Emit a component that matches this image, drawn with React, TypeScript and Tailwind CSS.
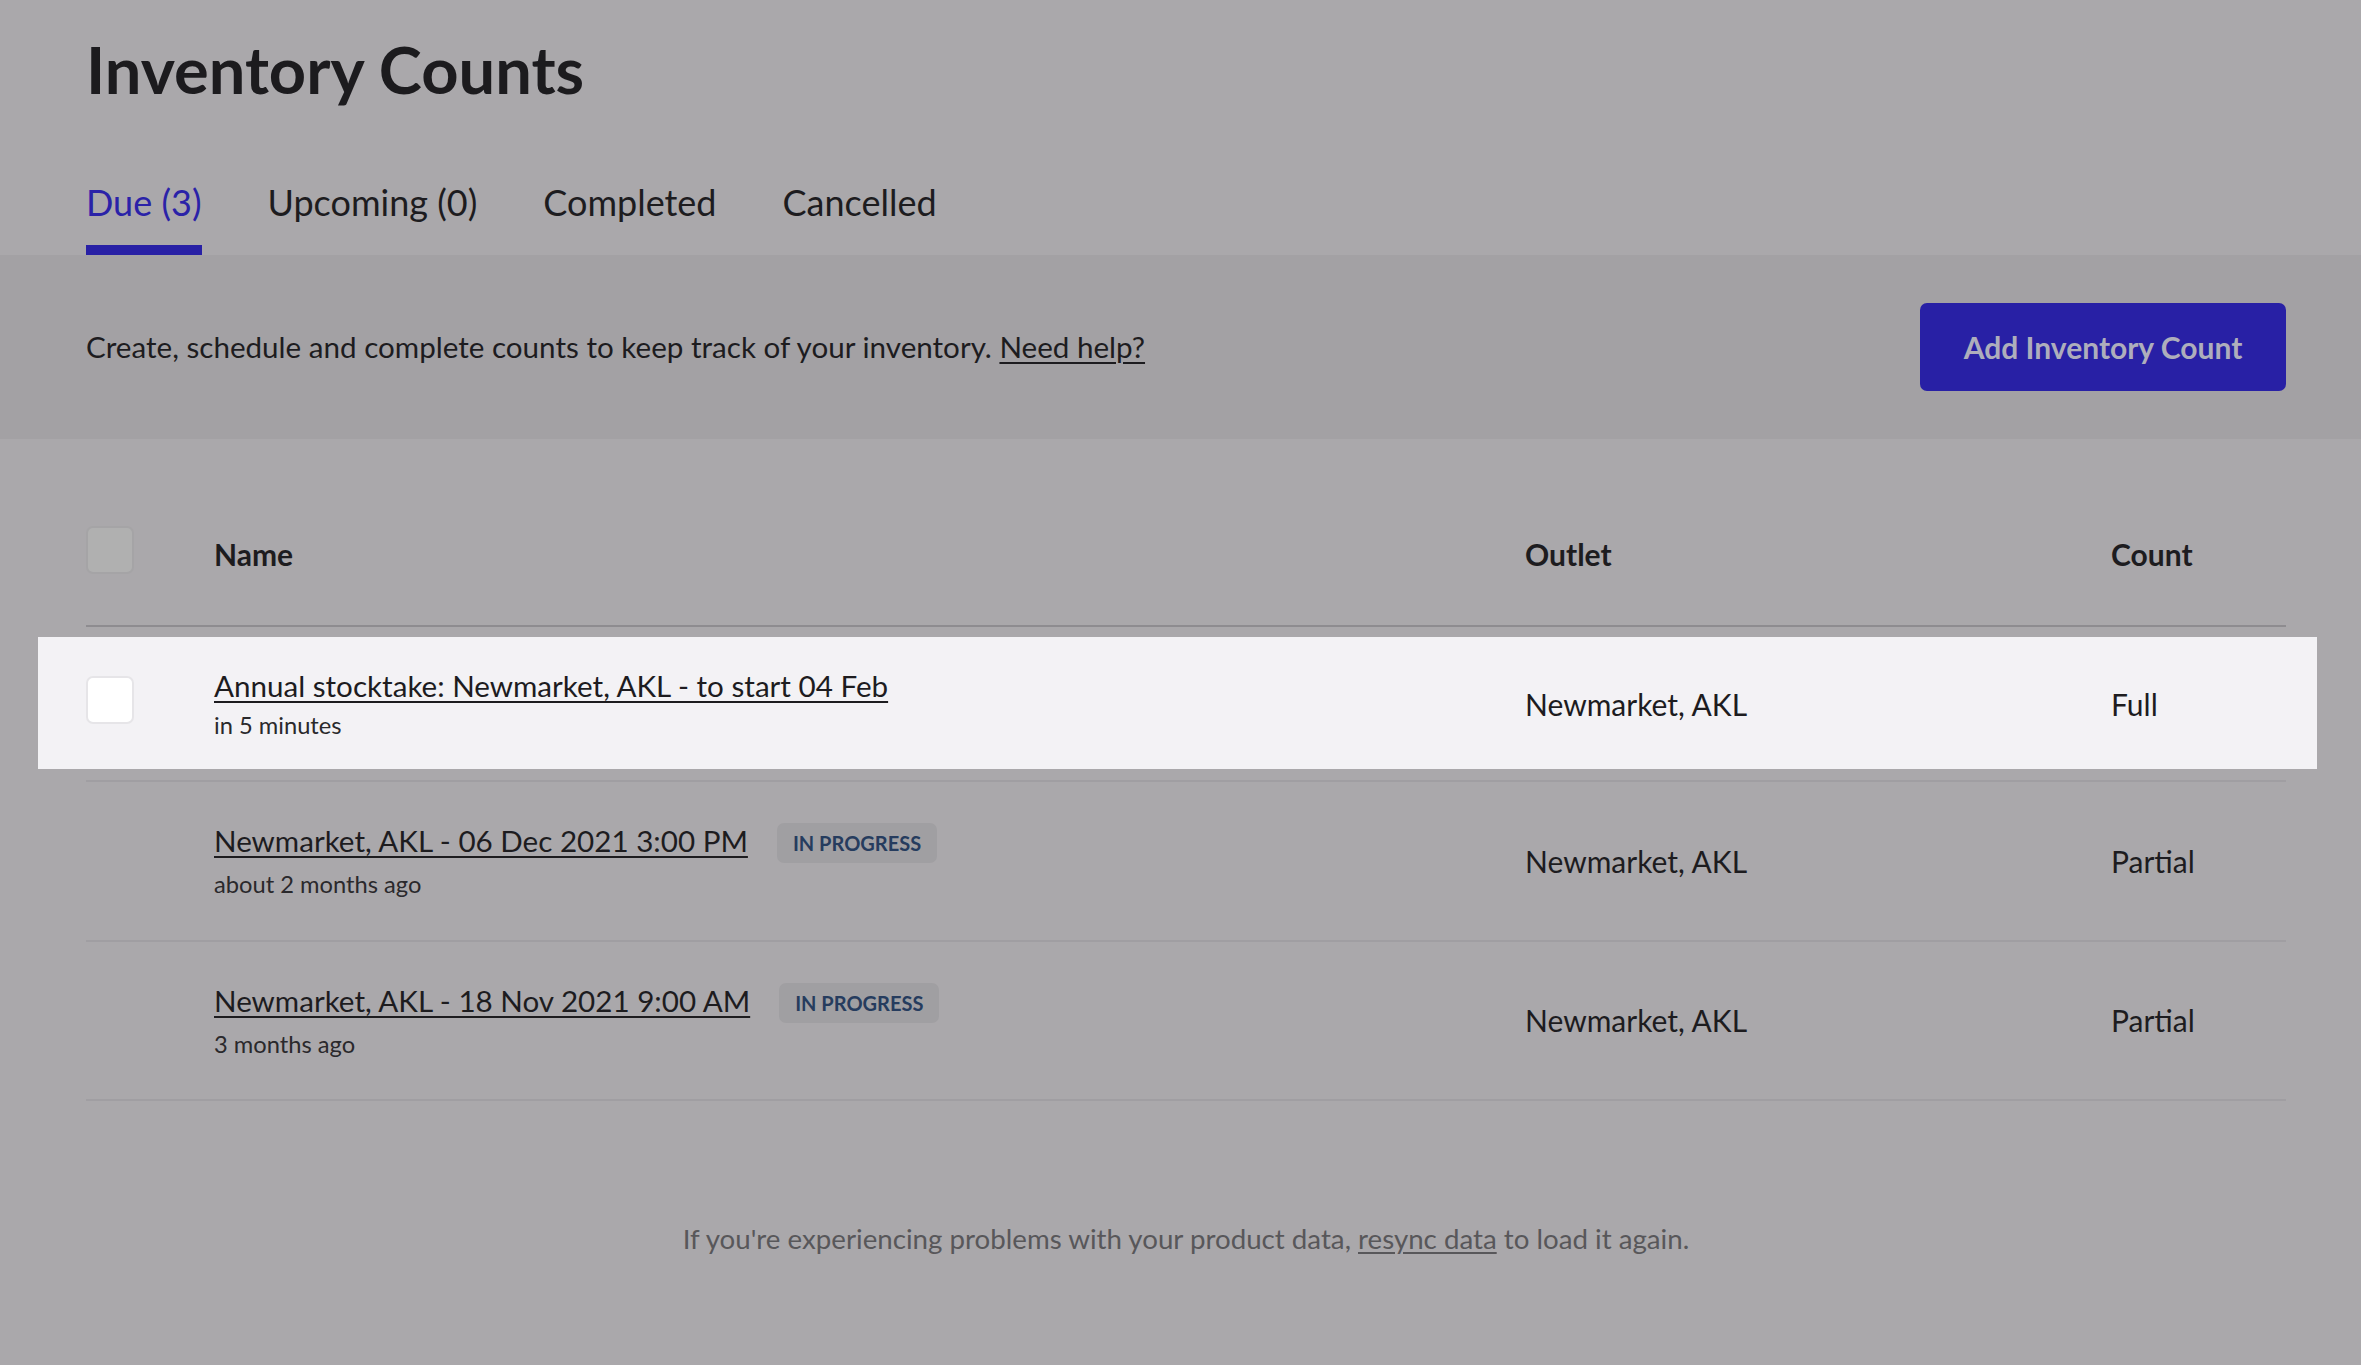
import React from "react";

const rows = [
  { title: "Annual stocktake: Newmarket, AKL - to start 04 Feb", sub: "in 5 minutes", badge: false, outlet: "Newmarket, AKL", count: "Full", hl: true },
  { title: "Newmarket, AKL - 06 Dec 2021 3:00 PM", sub: "about 2 months ago", badge: true, outlet: "Newmarket, AKL", count: "Partial", hl: false },
  { title: "Newmarket, AKL - 18 Nov 2021 9:00 AM", sub: "3 months ago", badge: true, outlet: "Newmarket, AKL", count: "Partial", hl: false },
];

export default function App() {
  return (
    <div className="min-h-[1365px] w-full bg-[#aaa8ab] text-[#1d1c1f]" style={{ fontFamily: "Lato, 'Noto Sans', sans-serif" }}>
      <div className="pl-[86px] pr-[75px]">
        <h1 className="pt-[30px] text-[65px] font-bold leading-[1.2] text-[#1c1b1e]">Inventory Counts</h1>
        <div className="mt-[73px] flex gap-[66px] text-[36px] leading-[1.2]">
          <div className="flex flex-col">
            <span className="text-[#2a22a8]">Due (3)</span>
            <div className="mt-[21px] h-[10px] bg-[#2820a5]" />
          </div>
          <span>Upcoming (0)</span>
          <span>Completed</span>
          <span>Cancelled</span>
        </div>
      </div>

      <div className="flex h-[184px] items-center justify-between bg-[#a3a1a4] pl-[86px] pr-[75px]">
        <p className="text-[29.6px] leading-[1.2]">
          Create, schedule and complete counts to keep track of your inventory.{" "}
          <span className="underline decoration-2 underline-offset-[4px]">Need help?</span>
        </p>
        <button className="flex h-[88px] w-[366px] items-center justify-center rounded-[7px] bg-[#2820a5] text-[30px] font-bold text-[#aeaebc]">
          Add Inventory Count
        </button>
      </div>

      <div className="pl-[86px] pr-[75px]">
        <div className="grid h-[188px] grid-cols-[128px_1311px_586px_1fr] items-start border-b-2 border-[#8e8c90] pt-[87px] text-[30px] font-bold leading-[1.2]">
          <div className="h-[48px] w-[48px] rounded-[7px] border-2 border-[#a5a4a6] bg-[#b0b0b0]" />
          <span className="mt-[10px]">Name</span>
          <span className="mt-[10px]">Outlet</span>
          <span className="mt-[10px]">Count</span>
        </div>

        {rows.map((r, i) => (
          <div key={i} className="relative grid grid-cols-[128px_1311px_586px_1fr] items-center border-b-2 border-[#a09ea2] py-[41px] text-[30px] leading-[1.2]">
            {r.hl && <div className="absolute top-[10px] bottom-[11px] -left-[48px] -right-[31px] bg-[#f3f2f5]" />}
            <div className="relative self-start">
              {r.hl && <div className="mt-[8px] h-[48px] w-[48px] rounded-[7px] border-2 border-[#e6e5e8] bg-white" />}
            </div>
            <div className="relative flex flex-col">
              <div className="flex items-start gap-[29px]">
                <span className="text-[29.6px] underline decoration-2 underline-offset-[4px]">{r.title}</span>
                {r.badge && (
                  <span className="flex h-[40px] items-center rounded-[7px] bg-[#a09fa2] px-[16px] text-[20px] font-bold uppercase text-[#263c5e]">
                    In Progress
                  </span>
                )}
              </div>
              <span className="mt-[7px] text-[23.7px] text-[#2a292c]">{r.sub}</span>
            </div>
            <span className="relative">{r.outlet}</span>
            <span className="relative">{r.count}</span>
          </div>
        ))}

        <p className="mt-[121px] text-center text-[27.7px] leading-[1.2] text-[#58575a]">
          If you're experiencing problems with your product data,{" "}
          <span className="underline underline-offset-[3px]">resync data</span> to load it again.
        </p>
      </div>
    </div>
  );
}
